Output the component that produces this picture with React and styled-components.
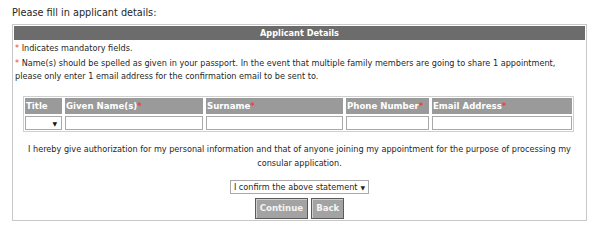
import React from 'react'
import styled, { createGlobalStyle } from 'styled-components'

const GlobalStyle = createGlobalStyle`
  html, body { margin: 0; padding: 0; background: #fff; }
  body { font-family: "DejaVu Sans", Verdana, sans-serif; font-size: 8.15px; color: #262626; }
`

const columns = [
  { label: 'Title', select: true },
  { label: 'Given Name(s)', req: true },
  { label: 'Surname', req: true },
  { label: 'Phone Number', req: true },
  { label: 'Email Address', req: true },
]

const App = () => {
  return (
    <>
      <GlobalStyle />
      <Page>
        <Intro>Please fill in applicant details:</Intro>
        <Box>
          <Header>Applicant Details</Header>
          <Note><Star>*</Star> Indicates mandatory fields.</Note>
          <Note>
            <Star>*</Star> Name(s) should be spelled as given in your passport. In the event that multiple family members are going to share 1 appointment, please only enter 1 email address for the confirmation email to be sent to.
          </Note>
          <TableWrap>
            <Grid>
              {columns.map((c) => (
                <Th key={c.label}>
                  {c.label}{c.req && <Star>*</Star>}
                </Th>
              ))}
              {columns.map((c) => (
                <Td key={c.label + '-in'}>
                  {c.select ? <TitleSelect>▼</TitleSelect> : <Input />}
                </Td>
              ))}
            </Grid>
          </TableWrap>
          <Consent>
            I hereby give authorization for my personal information and that of anyone joining my appointment for the purpose of processing my consular application.
          </Consent>
          <Confirm>
            <ConfirmSelect>I confirm the above statement <Arrow>▼</Arrow></ConfirmSelect>
          </Confirm>
          <Buttons>
            <Button>Continue</Button>
            <Button>Back</Button>
          </Buttons>
        </Box>
      </Page>
    </>
  )
}

export default App

const Page = styled.div`
  width: 597px;
  height: 234px;
  padding: 7px 10px 0 12px;
  box-sizing: border-box;
`
const Intro = styled.div`
  height: 17px;
  line-height: 12px;
  font-size: 9.7px;
`
const Box = styled.div`
  border: 1px solid #c8c8c8;
  padding: 1px 1px 1px 1px;
  width: 575px;
  box-sizing: border-box;
`
const Header = styled.div`
  background: #6c6c6c;
  color: #fff;
  font-weight: bold;
  text-align: center;
  height: 14px;
  line-height: 14px;
  font-size: 8.2px;
`
const Note = styled.div`
  padding: 0 4px 0 1px;
  line-height: 13px;
  margin-top: 2px;
`
const Star = styled.span`
  color: #e0474c;
`
const TableWrap = styled.div`
  margin: 13px 0 0 9px;
  width: 551px;
  border: 1px solid #cfcfcf;
  padding: 1px;
  box-sizing: border-box;
`
const Grid = styled.div`
  display: grid;
  grid-template-columns: 37px 138px 137px 83px 1fr;
  gap: 2px 3px;
`
const Th = styled.div`
  background: #9a9a9a;
  color: #fff;
  font-weight: bold;
  font-size: 8.6px;
  height: 16px;
  line-height: 16px;
  padding-left: 1px;
  white-space: nowrap;
`
const Td = styled.div`
  height: 14px;
`
const Input = styled.div`
  height: 14px;
  border: 1px solid #a9a9a9;
  box-sizing: border-box;
  background: #fff;
`
const TitleSelect = styled.div`
  height: 14px;
  border: 1px solid #a9a9a9;
  box-sizing: border-box;
  background: #fff;
  display: flex;
  justify-content: flex-end;
  align-items: center;
  padding-right: 4px;
  font-size: 6px;
  color: #111;
`
const Consent = styled.div`
  text-align: center;
  line-height: 14px;
  padding: 0 10px;
  margin-top: 10px;
`
const Confirm = styled.div`
  display: flex;
  justify-content: center;
  margin-top: 10px;
`
const ConfirmSelect = styled.div`
  border: 1px solid #a9a9a9;
  height: 14px;
  box-sizing: border-box;
  display: flex;
  align-items: center;
  padding: 0 3px;
  gap: 3px;
  white-space: nowrap;
`
const Arrow = styled.span`
  font-size: 6px;
`
const Buttons = styled.div`
  display: flex;
  justify-content: center;
  gap: 3px;
  margin-top: 4px;
`
const Button = styled.div`
  background: #a3a3a3;
  color: #f4f4f4;
  border: 1px solid #5a5a5a;
  box-shadow: inset 1px 1px 0 #d0d0d0;
  font-weight: bold;
  font-size: 8.6px;
  height: 21px;
  line-height: 19px;
  padding: 0 4px;
  box-sizing: border-box;
`
